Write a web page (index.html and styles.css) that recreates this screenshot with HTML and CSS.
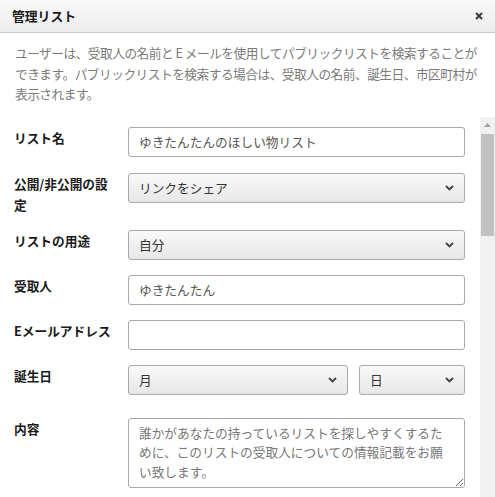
FILE: index.html
```html
<!DOCTYPE html>
<html lang="ja">
<head>
    <meta charset="UTF-8">
    <meta name="viewport" content="width=device-width, initial-scale=1.0">
    <title>管理リスト</title>
    <link rel="stylesheet" href="styles.css">
</head>
<body>
    <div class="modal">
        <div class="modal-header">
            <h3 class="modal-title">管理リスト</h3>
            <button class="close-btn" type="button" aria-label="閉じる">
                <svg width="8" height="8" viewBox="0 0 8 8"><path d="M1 1l6 6M7 1L1 7" stroke="#3c3c3c" stroke-width="2"/></svg>
            </button>
        </div>

        <p class="modal-note">ユーザーは、受取人の名前と E メールを使用してパブリックリストを検索することが<br>できます。パブリックリストを検索する場合は、受取人の名前、誕生日、市区町村が<br>表示されます。</p>

        <div class="modal-body">
            <form class="list-form">
                <div class="form-row">
                    <label class="form-label" for="list-name">リスト名</label>
                    <div class="form-field">
                        <input class="form-control" id="list-name" type="text" value="ゆきたんたんのほしい物リスト">
                    </div>
                </div>

                <div class="form-row">
                    <label class="form-label" for="privacy">公開/非公開の設定</label>
                    <div class="form-field">
                        <div class="select-wrap">
                            <select class="form-control form-select" id="privacy">
                                <option>リンクをシェア</option>
                                <option>公開</option>
                                <option>非公開</option>
                            </select>
                            <svg class="chevron" width="9" height="6" viewBox="0 0 9 6"><path d="M1 1l3.5 3.5L8 1" fill="none" stroke="#444" stroke-width="1.9"/></svg>
                        </div>
                    </div>
                </div>

                <div class="form-row">
                    <label class="form-label" for="purpose">リストの用途</label>
                    <div class="form-field">
                        <div class="select-wrap">
                            <select class="form-control form-select" id="purpose">
                                <option>自分</option>
                                <option>ほかの人</option>
                            </select>
                            <svg class="chevron" width="9" height="6" viewBox="0 0 9 6"><path d="M1 1l3.5 3.5L8 1" fill="none" stroke="#444" stroke-width="1.9"/></svg>
                        </div>
                    </div>
                </div>

                <div class="form-row">
                    <label class="form-label" for="recipient">受取人</label>
                    <div class="form-field">
                        <input class="form-control" id="recipient" type="text" value="ゆきたんたん">
                    </div>
                </div>

                <div class="form-row">
                    <label class="form-label" for="email">Eメールアドレス</label>
                    <div class="form-field">
                        <input class="form-control" id="email" type="email">
                    </div>
                </div>

                <div class="form-row birthday-row">
                    <label class="form-label" for="month">誕生日</label>
                    <div class="form-field birthday">
                        <div class="select-wrap month">
                            <select class="form-control form-select" id="month">
                                <option>月</option>
                            </select>
                            <svg class="chevron" width="9" height="6" viewBox="0 0 9 6"><path d="M1 1l3.5 3.5L8 1" fill="none" stroke="#444" stroke-width="1.9"/></svg>
                        </div>
                        <div class="select-wrap day">
                            <select class="form-control form-select" id="day">
                                <option>日</option>
                            </select>
                            <svg class="chevron" width="9" height="6" viewBox="0 0 9 6"><path d="M1 1l3.5 3.5L8 1" fill="none" stroke="#444" stroke-width="1.9"/></svg>
                        </div>
                    </div>
                </div>

                <div class="form-row">
                    <label class="form-label" for="about">内容</label>
                    <div class="form-field">
                        <textarea class="form-control form-textarea" id="about" placeholder="誰かがあなたの持っているリストを探しやすくするために、このリストの受取人についての情報記載をお願い致します。"></textarea>
                    </div>
                </div>
            </form>

            <div class="scrollbar">
                <div class="scroll-arrow">
                    <svg width="7" height="4" viewBox="0 0 7 4"><path d="M0 4h7L3.5 0z" fill="#a3a3a3"/></svg>
                </div>
                <div class="scroll-thumb"></div>
            </div>
        </div>
    </div>
</body>
</html>
```

FILE: styles.css
```css
html, body {
    margin: 0;
    height: 100%;
    overflow: hidden;
}
body {
    font-family: "Noto Sans CJK JP", "Noto Sans", sans-serif;
    font-size: 12.7px;
    color: #1a1a1a;
    background: #fff;
}
.modal {
    display: flex;
    flex-direction: column;
    height: 100vh;
}
.modal-header {
    display: flex;
    align-items: center;
    justify-content: space-between;
    height: 33px;
    padding: 0 12px 0 12px;
    background: linear-gradient(#f9f9f9, #ececec);
    border-bottom: 1px solid #c9c9c9;
    box-sizing: border-box;
    flex-shrink: 0;
}
.modal-title {
    margin: 0;
    font-size: 12.8px;
    font-weight: bold;
    line-height: 1;
}
.close-btn {
    display: flex;
    border: none;
    background: none;
    padding: 0;
    cursor: pointer;
}
.modal-note {
    margin: 0;
    padding: 10px 0 12px 15px;
    color: #7a7a7a;
    line-height: 20.5px;
    letter-spacing: -0.5px;
    white-space: nowrap;
    flex-shrink: 0;
}
.modal-body {
    flex: 1;
    display: flex;
    min-height: 0;
    overflow: hidden;
}
.list-form {
    flex: 1;
    padding: 10px 15px 0 14px;
}
.scrollbar {
    width: 15px;
    flex-shrink: 0;
    background: #f1f1f1;
}
.scroll-arrow {
    height: 16px;
    display: flex;
    align-items: center;
    justify-content: center;
}
.scroll-thumb {
    height: 102px;
    margin: 1px 1px 0;
    background: #c1c1c1;
}
.form-row {
    display: flex;
    margin-bottom: 15px;
}
.form-row:first-child {
    margin-bottom: 16px;
}
.birthday-row {
    margin-bottom: 23px;
}
.form-label {
    width: 114px;
    flex-shrink: 0;
    font-weight: bold;
    line-height: 21px;
    padding-right: 8px;
    box-sizing: border-box;
}
.form-field {
    flex: 1;
}
.form-control {
    display: block;
    width: 100%;
    height: 30px;
    box-sizing: border-box;
    border: 1px solid #a9a9a9;
    border-radius: 3px;
    background: #fff;
    padding: 0 10px;
    font-family: inherit;
    font-size: 12.7px;
    color: #555;
    outline: none;
}
.form-select {
    appearance: none;
    -webkit-appearance: none;
    background: linear-gradient(#f9f9f9, #e7e7e7);
    color: #333;
    padding-right: 28px;
}
.select-wrap {
    position: relative;
}
.chevron {
    position: absolute;
    right: 11px;
    top: 12px;
    pointer-events: none;
}
.birthday {
    display: flex;
    gap: 11px;
}
.birthday .month {
    flex: 1;
}
.birthday .day {
    width: 106px;
}
.form-textarea {
    height: 70px;
    padding: 4px 14px 4px 10px;
    line-height: 19.5px;
    resize: vertical;
}
.form-textarea::placeholder {
    color: #777;
}
```
